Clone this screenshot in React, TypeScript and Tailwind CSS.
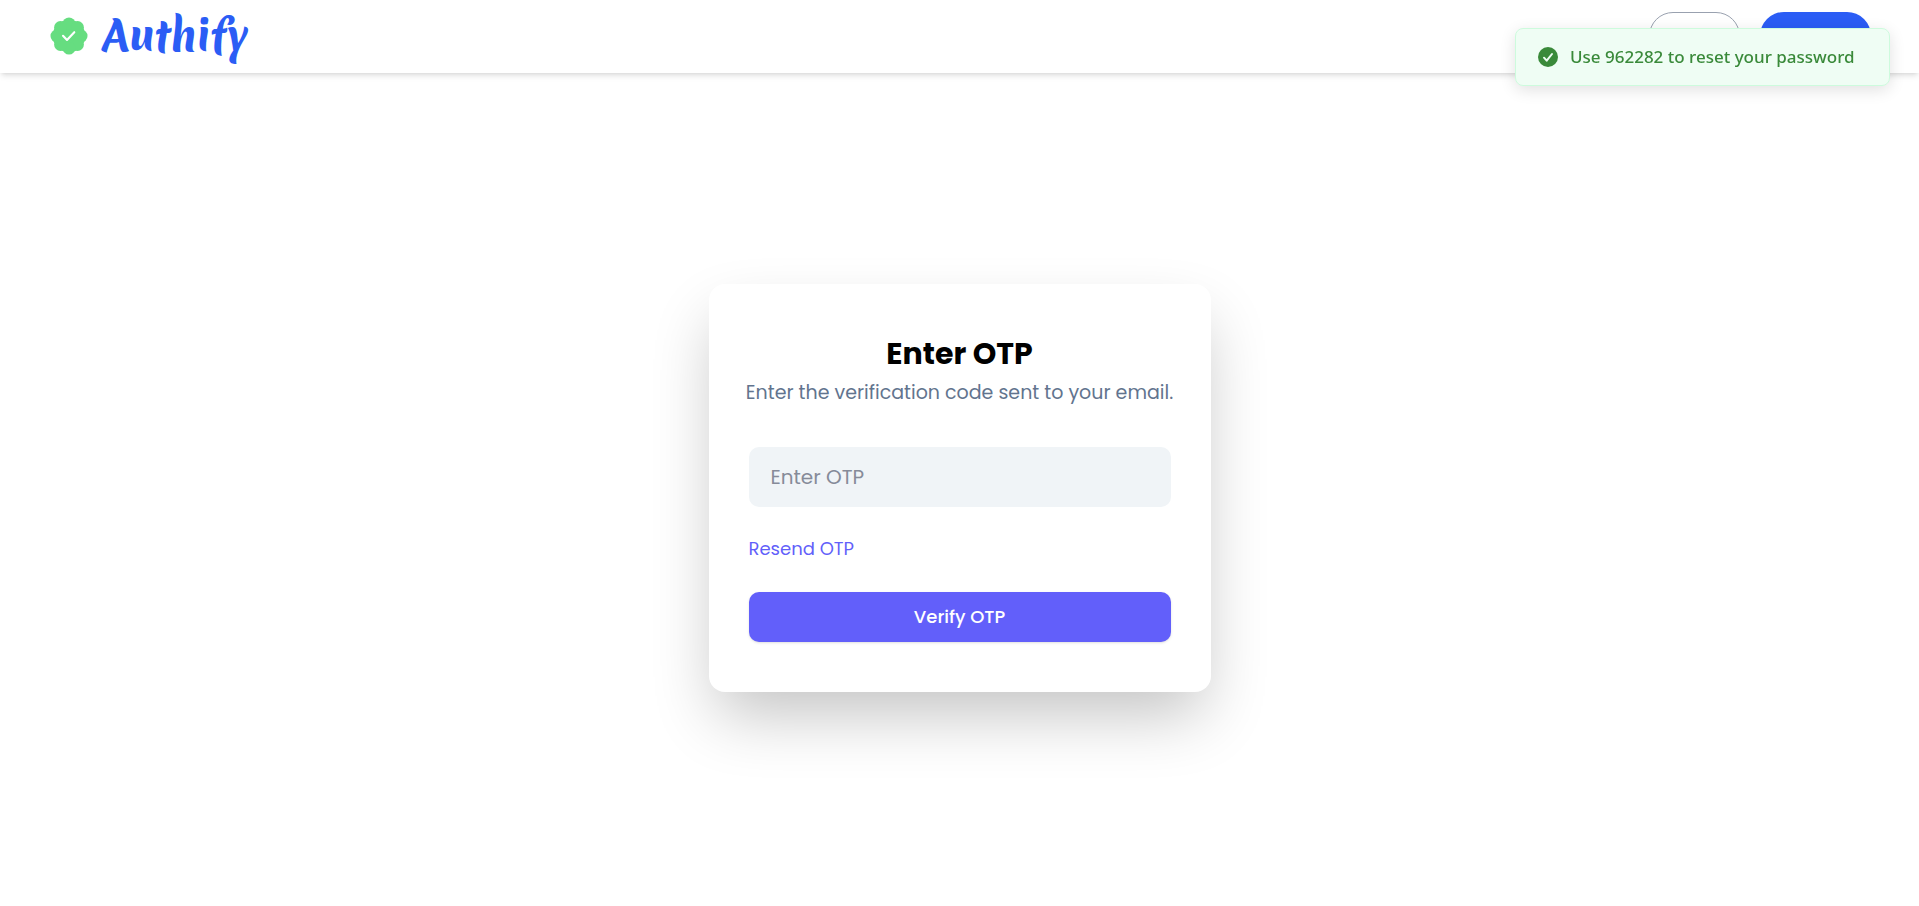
import { useState } from "react";

function Badge() {
  return (
    <svg viewBox="0 0 38 38" className="size-[38px]" aria-hidden="true">
      <g fill="#66dd80">
        <circle cx="19" cy="19" r="16.3" />
        <circle cx="19" cy="6.8" r="6.3" />
        <circle cx="27.6" cy="10.4" r="6.3" />
        <circle cx="31.2" cy="19" r="6.3" />
        <circle cx="27.6" cy="27.6" r="6.3" />
        <circle cx="19" cy="31.2" r="6.3" />
        <circle cx="10.4" cy="27.6" r="6.3" />
        <circle cx="6.8" cy="19" r="6.3" />
        <circle cx="10.4" cy="10.4" r="6.3" />
      </g>
      <path d="M13 18.8 L17 23 L24.3 15.2" fill="none" stroke="#fff" strokeWidth="2.1" strokeLinecap="round" strokeLinejoin="round" />
    </svg>
  );
}

function Header() {
  return (
    <header className="flex h-[73px] items-center justify-between bg-white pr-12 pb-0.5 pl-[50px] shadow-md">
      <a href="#" className="flex items-center gap-3.5 font-['Merienda','Lato',sans-serif] text-[40px] leading-none font-extrabold text-[#2b5df5]">
        <Badge />
        Authify
      </a>
      <nav className="flex gap-5 text-xl">
        <button type="button" className="h-12 rounded-full border border-gray-400 px-[18px]">Login</button>
        <button type="button" className="h-12 rounded-full bg-[#2b5df5] px-[18px] text-white">Sign Up</button>
      </nav>
    </header>
  );
}

function Toast() {
  return (
    <div
      role="status"
      className="fixed top-7 right-[29px] flex h-[58px] w-[375px] items-center gap-3 rounded-lg border border-[#cdfbdd] bg-[#effdf4] px-[22px] font-['Noto_Sans',sans-serif] text-[17px] font-medium text-[#3a8a3a] shadow-[0_4px_16px_rgba(0,0,0,0.12)]"
    >
      <svg viewBox="0 0 20 20" className="size-5 shrink-0" aria-hidden="true">
        <circle cx="10" cy="10" r="10" fill="#3a8a3a" />
        <path d="M6 10.7 L8.7 13.7 L14 7" fill="none" stroke="#effdf4" strokeWidth="2" strokeLinecap="round" strokeLinejoin="round" />
      </svg>
      <span className="whitespace-nowrap">Use 962282 to reset your password</span>
    </div>
  );
}

export default function App() {
  const [otp, setOtp] = useState("");
  return (
    <div className="flex min-h-screen flex-col bg-white font-['Poppins','Inter',sans-serif]">
      <Header />
      <main className="flex flex-1 items-center justify-center pb-1">
        <form
          onSubmit={(e) => e.preventDefault()}
          className="flex w-full max-w-[502px] flex-col rounded-2xl bg-white px-10 py-[50px] shadow-[0_30px_64px_-8px_rgba(0,0,0,0.24)]"
        >
          <h1 className="text-center text-3xl leading-10 font-bold text-black">Enter OTP</h1>
          <p className="mt-[5px] flex justify-center text-[19px] leading-7 whitespace-nowrap text-slate-500">
            Enter the verification code sent to your email.
          </p>
          <input
            type="text"
            aria-label="Enter OTP"
            placeholder="Enter OTP"
            value={otp}
            onChange={(e) => setOtp(e.target.value)}
            className="mt-10 h-[60px] w-full rounded-[10px] bg-[#f0f4f7] px-[22px] text-xl text-slate-800 outline-none placeholder:text-[#868b99]"
          />
          <button type="button" className="mt-7 self-start text-lg leading-7 text-[#625ffa]">Resend OTP</button>
          <button type="submit" className="mt-[29px] h-[50px] w-full rounded-[10px] bg-[#625ffa] text-lg font-medium text-white shadow-sm">
            Verify OTP
          </button>
        </form>
      </main>
      <Toast />
    </div>
  );
}
